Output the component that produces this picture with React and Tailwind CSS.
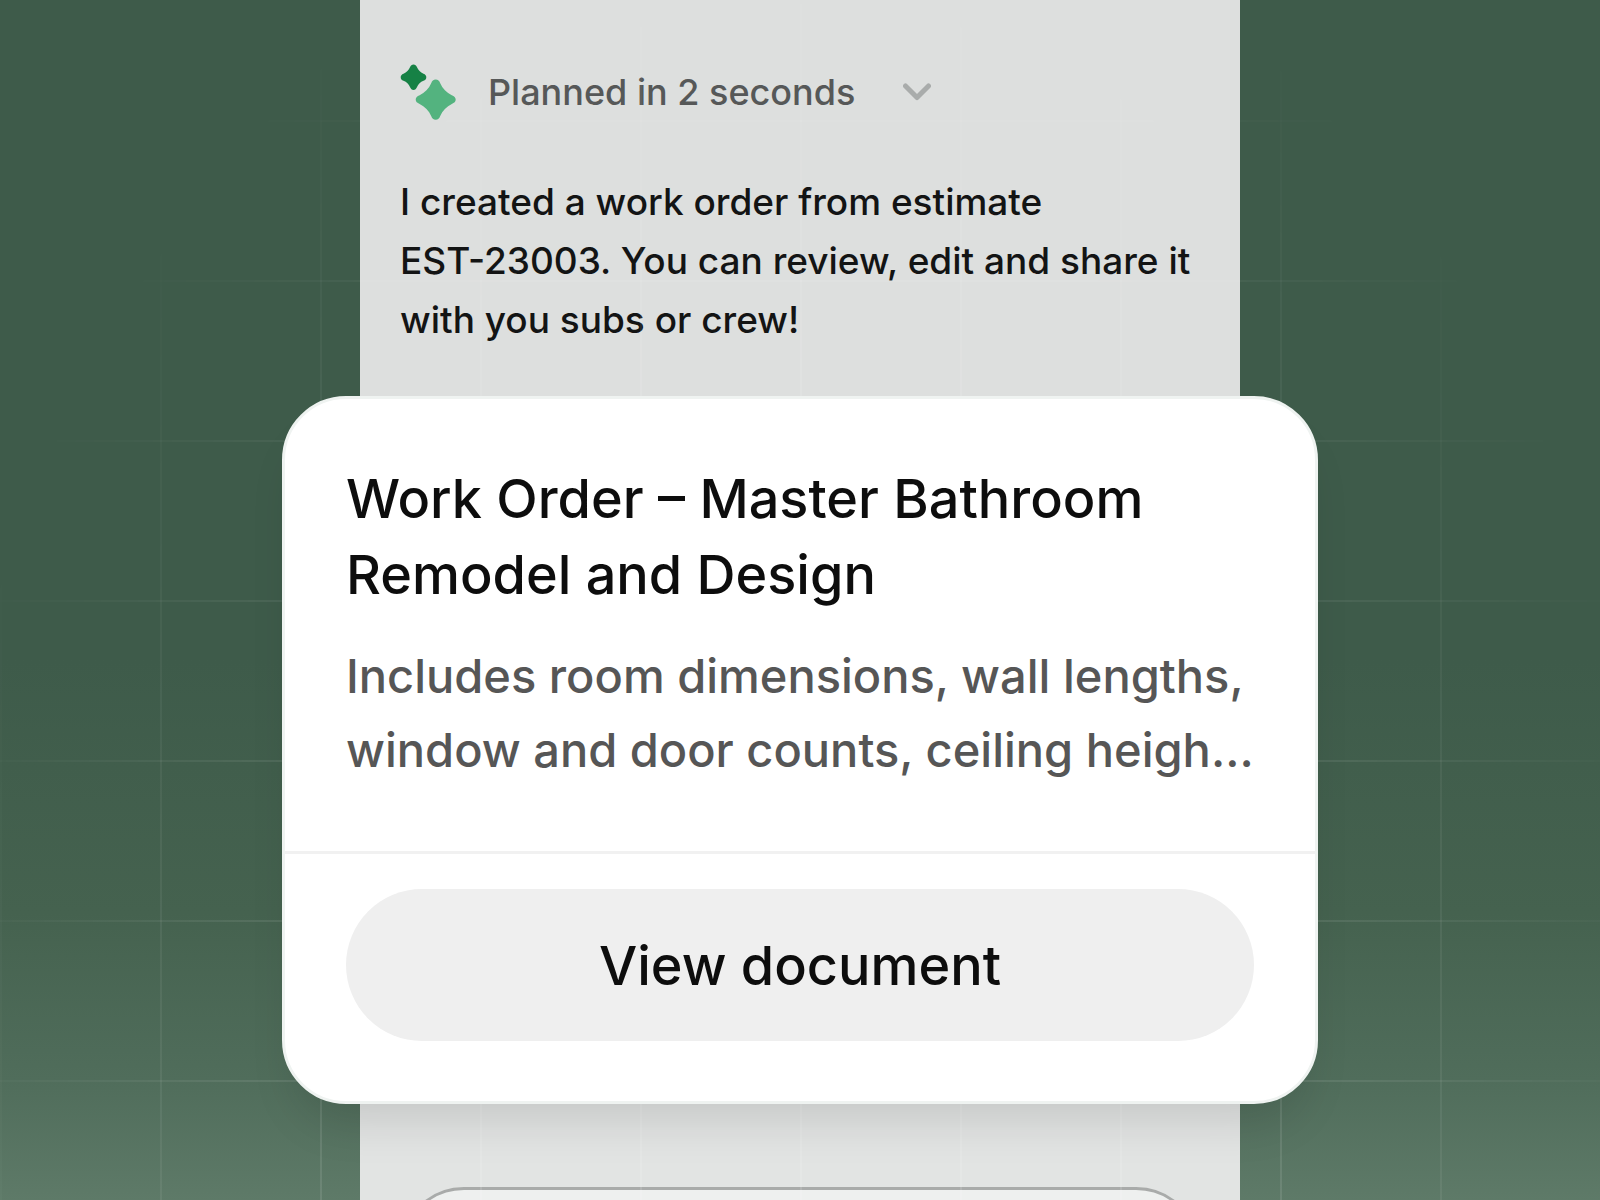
import React from "react";

function SparkleIcon() {
  return (
    <svg viewBox="0 0 56 56" className="w-14 h-14 shrink-0" aria-hidden="true">
      <path
        d="M13.500 0.500C15.200 0.500 16.200 1.500 16.900 3.100C18.400 6.500 20.300 8.400 23.500 9.700C25.300 10.400 26.300 11.500 26.300 13.200C26.300 14.900 25.300 16 23.500 16.700C20.300 18 18.400 19.900 16.900 23.300C16.200 24.900 15.200 25.900 13.500 25.900C11.800 25.900 10.800 24.900 10.100 23.300C8.600 19.900 6.700 18 3.500 16.700C1.700 16 0.700 14.900 0.700 13.200C0.700 11.500 1.700 10.400 3.500 9.700C6.700 8.400 8.600 6.500 10.100 3.100C10.800 1.500 11.800 0.500 13.500 0.500Z"
        fill="#168145"
      />
      <path
        d="M35.700 15.400C38 15.400 39.400 16.800 40.100 19C42.500 24.600 46.600 28.700 51.800 31.200C54.200 32.200 55.700 33.400 55.700 35.600C55.700 37.800 54.200 39 51.800 40C46.600 42.500 42.500 46.600 40.100 52.200C39.400 54.400 38 55.800 35.700 55.800C33.400 55.800 32 54.400 31.300 52.200C28.900 46.600 24.800 42.500 19.600 40C17.200 39 15.700 37.800 15.700 35.600C15.700 33.400 17.200 32.200 19.600 31.200C24.800 28.700 28.900 24.600 31.300 19C32 16.800 33.400 15.400 35.700 15.400Z"
        fill="#53b37f"
      />
    </svg>
  );
}

function ChevronIcon() {
  return (
    <svg viewBox="0 0 28 18" className="w-7 h-[18px]" fill="none" aria-hidden="true">
      <path
        d="M2.500 3L14 14.500L25.500 3"
        stroke="#a9acab"
        strokeWidth="5"
        strokeLinecap="round"
        strokeLinejoin="round"
      />
    </svg>
  );
}

function WorkOrderCard() {
  return (
    <article className="relative z-10 w-full max-w-[1036px] rounded-[64px] border-[3px] border-[#eff3f1] bg-white shadow-[0_32px_48px_-16px_rgba(0,0,0,0.13)]">
      <div className="px-[61px] pt-[62px] pb-16">
        <h2 className="text-[54px] leading-[76px] font-medium text-[#0d0d0d]">
          Work Order – Master Bathroom Remodel and Design
        </h2>
        <p className="mt-[26px] text-[47px] leading-[74px] font-medium text-[#565656]">
          Includes room dimensions, wall lengths, window and door counts, ceiling heigh...
        </p>
      </div>
      <div className="border-t-[3px] border-[#f1f1f1] px-[61px] pt-[35px] pb-[60px]">
        <button
          type="button"
          className="flex h-[152px] w-full items-center justify-center rounded-full bg-[#efefef] text-[54px] font-medium text-[#0d0d0d]"
        >
          View document
        </button>
      </div>
    </article>
  );
}

export default function App() {
  return (
    <div className="relative h-screen overflow-hidden bg-[linear-gradient(to_bottom,#3e5b4a_0%,#3e5b4a_55%,#45624f_76%,#506d5b_90%,#5e7a68_100%)] font-['Inter',sans-serif]">
      <main className="flex flex-col items-center">
        <section className="w-full max-w-[880px] bg-[#dddfde] px-10 pt-16 pb-[47px]">
          <button
            type="button"
            className="flex items-center text-[36px] leading-[56px] font-medium text-[#565858]"
          >
            <SparkleIcon />
            <span className="ml-8 mr-12">Planned in 2 seconds</span>
            <ChevronIcon />
          </button>
          <p className="mt-[52px] text-[37px] leading-[59px] font-medium text-[#131414]">
            I created a work order from estimate{" "}
            <span className="whitespace-nowrap">EST-23003.</span> You can review, edit and share it
            with you subs or crew!
          </p>
        </section>
        <WorkOrderCard />
        <section className="w-full max-w-[880px] bg-[#e2e4e3] px-10 pt-[83px]">
          <textarea
            aria-label="Message"
            className="block h-40 w-full resize-none rounded-[64px] border-[3px] border-[#a9abaa] bg-[#eef0ef] px-12 py-8"
          />
        </section>
      </main>
      {/* grid lines, faded out towards the corners */}
      <div className="pointer-events-none absolute inset-0 bg-[linear-gradient(to_right,rgba(255,255,255,0.12)_2px,transparent_2px),linear-gradient(to_bottom,rgba(255,255,255,0.12)_2px,transparent_2px)] bg-[size:160px_160px] bg-[position:0px_120px] mask-[radial-gradient(900px_1240px_at_50%_90%,black_45%,transparent_100%)]" />
    </div>
  );
}
